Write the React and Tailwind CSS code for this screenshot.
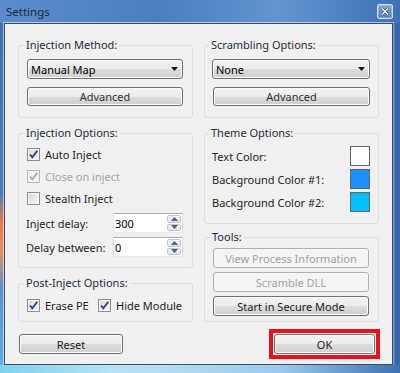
import React from "react";

const btnOn =
  "border-[#707070] bg-[linear-gradient(#f3f3f3,#ebebeb_50%,#dddddd_51%,#cfcfcf)] text-[#1e1e1e] shadow-[inset_0_0_0_1px_#fbfbfb]";
const btnOff = "border-[#adb2b5] bg-[#f4f4f4] text-[#a3a3a3]";

function Btn({ children, disabled, className = "" }) {
  return (
    <div
      className={`flex items-center justify-center rounded-[3px] border text-[11px] leading-none ${
        disabled ? btnOff : btnOn
      } ${className}`}
    >
      {children}
    </div>
  );
}

function Select({ value }) {
  return (
    <div
      className={`flex h-[20px] items-center justify-between rounded-[3px] border pl-[3px] pr-[4px] text-[11px] leading-none ${btnOn}`}
    >
      <span className="text-[#000]">{value}</span>
      <svg width="7" height="4" viewBox="0 0 7 4">
        <path d="M0 0H7L3.5 4Z" fill="#1a1a1a" />
      </svg>
    </div>
  );
}

function Group({ title, className = "", children }) {
  return (
    <fieldset className={`rounded-[3px] border border-[#d5dfe5] ${className}`}>
      <legend className="ml-[-3px] px-[2px] text-[11px] leading-[14px] text-[#1e2b40]">
        {title}
      </legend>
      {children}
    </fieldset>
  );
}

function Check({ checked, disabled }) {
  return (
    <span
      className={`relative flex h-[13px] w-[13px] shrink-0 items-center justify-center border ${
        disabled
          ? "border-[#b8b8b8] bg-[#f4f4f4]"
          : "border-[#8e8f8f] bg-[linear-gradient(135deg,#d4d7dc,#f8f8f8)] shadow-[inset_0_0_0_1px_#f4f4f4]"
      }`}
    >
      {checked && (
        <svg width="11" height="11" viewBox="0 0 11 11" className="absolute left-[0px] top-[0px]">
          <path
            d="M2 5.5L4.3 8.3L9.3 1.8"
            fill="none"
            stroke={disabled ? "#a8a8a8" : "#26407f"}
            strokeWidth="1.8"
          />
        </svg>
      )}
    </span>
  );
}

function CheckRow({ label, checked, disabled, className = "" }) {
  return (
    <div className={`flex h-[22px] items-center ${className}`}>
      <Check checked={checked} disabled={disabled} />
      <span
        className={`ml-[5px] whitespace-nowrap text-[11px] leading-none ${
          disabled ? "text-[#a6a6a6]" : "text-[#1e1e1e]"
        }`}
      >
        {label}
      </span>
    </div>
  );
}

function Spin({ label, value, className = "" }) {
  return (
    <div className={`flex h-[20px] items-center justify-between ${className}`}>
      <span className="ml-[-1px] text-[11px] leading-none text-[#1e1e1e]">{label}</span>
      <div className="flex h-[20px] w-[70px] items-stretch border border-[#abadb3] border-b-[#e3e9ef] border-l-[#e2e3ea] border-r-[#dbdfe6] bg-white">
        <span className="flex flex-1 items-center pl-[1px] text-[11px] leading-none text-[#000]">
          {value}
        </span>
        <div className="my-[1px] mr-[1px] flex w-[14px] flex-col gap-[1px]">
          <div className="flex flex-1 items-center justify-center rounded-[2px] border border-[#c2c7cf] bg-[linear-gradient(#f4f5f7,#e1e4e9)]">
            <svg width="7" height="4" viewBox="0 0 7 4">
              <path d="M3.5 0L7 4H0Z" fill="#4d6185" />
            </svg>
          </div>
          <div className="flex flex-1 items-center justify-center rounded-[2px] border border-[#c2c7cf] bg-[linear-gradient(#f4f5f7,#e1e4e9)]">
            <svg width="7" height="4" viewBox="0 0 7 4">
              <path d="M0 0H7L3.5 4Z" fill="#4d6185" />
            </svg>
          </div>
        </div>
      </div>
    </div>
  );
}

function ColorRow({ label, color }) {
  return (
    <div className="flex h-[20px] items-center justify-between">
      <span className="text-[11px] leading-none text-[#1e1e1e]">{label}</span>
      <div className={`h-[20px] w-[20px] border border-[#646464] ${color}`} />
    </div>
  );
}

export default function App() {
  return (
    <div className="flex h-[373px] w-[400px] flex-col overflow-hidden font-['Noto_Sans',sans-serif] bg-[#3c70b2]">
      {/* title bar */}
      <div className="flex h-[23px] shrink-0 items-center justify-between bg-[linear-gradient(90deg,#5a8ccb,#4b7fc0_40%,#6194d0_70%,#3f72b4)] pl-[6px] pr-[7px]">
        <span className="text-[11.5px] leading-none text-[#1c2a3a]">Settings</span>
        <div className="flex h-[15px] w-[16px] items-center justify-center rounded-[2px] border border-[#cfdcec] bg-[linear-gradient(#7ea6d8,#4f80bf)] shadow-[inset_0_0_0_1px_rgba(255,255,255,0.25)]">
          <svg width="8" height="7" viewBox="0 0 8 7">
            <path d="M1 0.5L7 6.5M7 0.5L1 6.5" stroke="#3a4a5e" strokeWidth="2.6" />
            <path d="M1 0.5L7 6.5M7 0.5L1 6.5" stroke="#ffffff" strokeWidth="1.4" />
          </svg>
        </div>
      </div>

      <div className="flex h-[342px] shrink-0">
        {/* left frame */}
        <div className="w-[4px] shrink-0 bg-[linear-gradient(#3d71b3,#4a7dbd_50%,#e07a4e_58%,#e98f62_66%,#5a8fd0_78%,#62ace6)]" />

        {/* client */}
        <div className="flex w-[389px] shrink-0 flex-col border border-[#3f4c5e] bg-[#f0f0f0] pl-[13px] pr-[13px] pt-[14px] shadow-[0_0_0_1px_rgba(255,255,255,0.55)]">
          <div className="flex gap-[11px]">
            {/* left column */}
            <div className="flex w-[175px] flex-col">
              <Group title="Injection Method:" className="pl-[8px] pr-[9px] pt-[7px] pb-[11px]">
                <Select value="Manual Map" />
                <Btn className="mt-[8px] h-[19px] text-[#333]">Advanced</Btn>
              </Group>

              <Group title="Injection Options:" className="mt-[8px] pl-[8px] pr-[9px] pt-[3px] pb-[10px]">
                <CheckRow label="Auto Inject" checked />
                <CheckRow label="Close on inject" checked disabled />
                <CheckRow label="Stealth Inject" />
                <Spin label="Inject delay:" value="300" className="mt-[4px]" />
                <Spin label="Delay between:" value="0" className="mt-[4px]" />
              </Group>

              <Group title="Post-Inject Options:" className="mt-[8px] pl-[8px] pr-[9px] pt-[4px] pb-[5px]">
                <div className="flex">
                  <CheckRow label="Erase PE" checked className="w-[71px]" />
                  <CheckRow label="Hide Module" checked />
                </div>
              </Group>
            </div>

            {/* right column */}
            <div className="flex w-[175px] flex-col">
              <Group title="Scrambling Options:" className="pl-[7px] pr-[8px] pt-[7px] pb-[11px]">
                <Select value="None" />
                <Btn className="mt-[8px] ml-[1px] h-[19px] text-[#333]">Advanced</Btn>
              </Group>

              <Group title="Theme Options:" className="mt-[8px] flex flex-col pl-[7px] pr-[8px] pt-[6px] pb-[11px]">
                <div className="flex flex-col gap-[3px]">
                  <ColorRow label="Text Color:" color="bg-white" />
                  <ColorRow label="Background Color #1:" color="bg-[#1e90ff]" />
                  <ColorRow label="Background Color #2:" color="bg-[#00bfff]" />
                </div>
              </Group>

              <Group title="Tools:" className="mt-[6px] pl-[8px] pr-[9px] pt-[4px] pb-[5px]">
                <div className="flex flex-col gap-[4px]">
                  <Btn disabled className="h-[20px]">View Process Information</Btn>
                  <Btn disabled className="h-[20px]">Scramble DLL</Btn>
                  <Btn className="h-[20px]">Start in Secure Mode</Btn>
                </div>
              </Group>
            </div>
          </div>

          {/* bottom buttons */}
          <div className="mt-[7px] flex h-[30px] items-center justify-between">
            <Btn className="ml-[1px] h-[20px] w-[104px]">Reset</Btn>
            <div className="mr-[-1px] border-[4px] border-[#e8111c] p-[1px]">
              <Btn className="h-[20px] w-[101px]">OK</Btn>
            </div>
          </div>
        </div>

        {/* right frame */}
        <div className="w-[7px] shrink-0 bg-[linear-gradient(90deg,#7aa3d6,#2f62a6_40%,#3a6dae)]" />
      </div>

      {/* bottom frame */}
      <div className="h-[8px] shrink-0 bg-[linear-gradient(90deg,#7fd2ee,#b9e3f4_30%,#9ccaee_70%,#3c6fb0)]" />
    </div>
  );
}
